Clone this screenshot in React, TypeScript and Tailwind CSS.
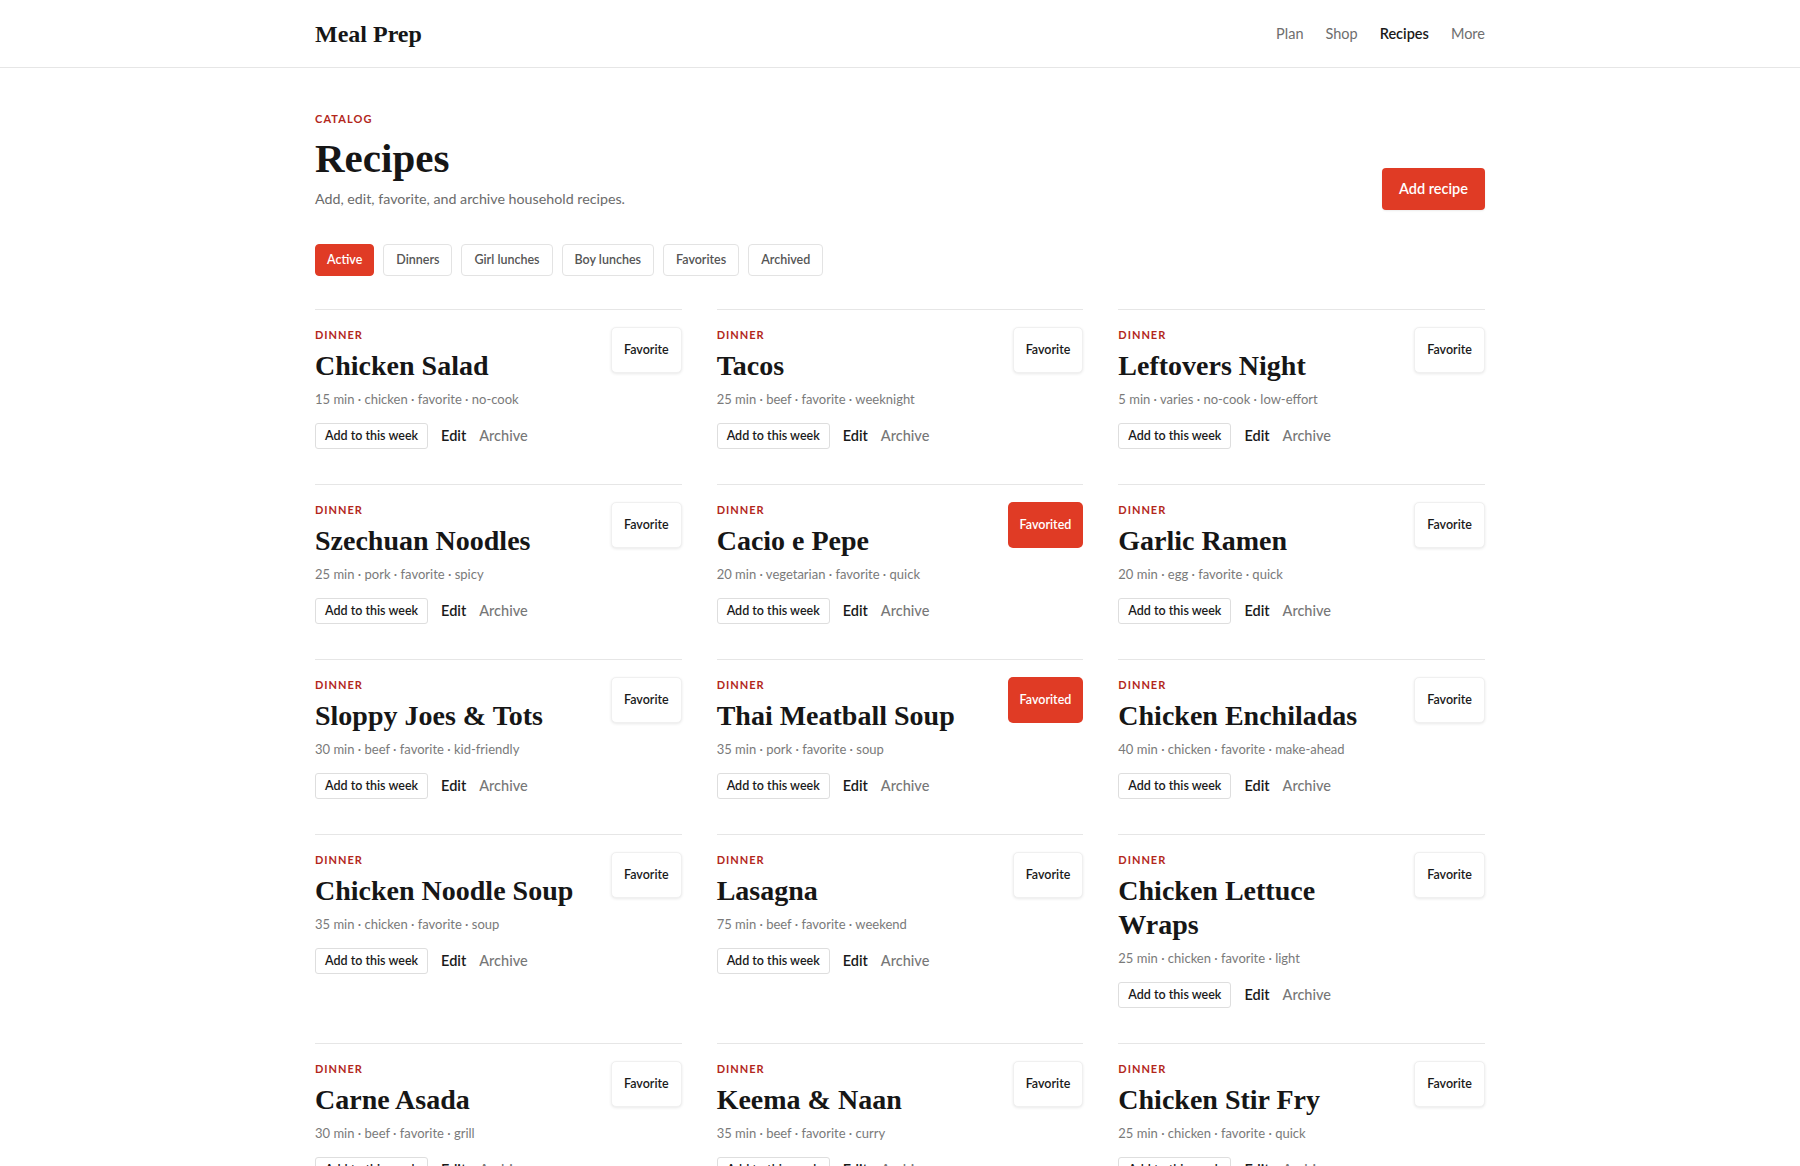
import { useState } from 'react';

type Recipe = {
  name: string;
  meta: string;
  favorited?: boolean;
};

const recipes: Recipe[] = [
  { name: 'Chicken Salad', meta: '15 min · chicken · favorite · no-cook' },
  { name: 'Tacos', meta: '25 min · beef · favorite · weeknight' },
  { name: 'Leftovers Night', meta: '5 min · varies · no-cook · low-effort' },
  { name: 'Szechuan Noodles', meta: '25 min · pork · favorite · spicy' },
  { name: 'Cacio e Pepe', meta: '20 min · vegetarian · favorite · quick', favorited: true },
  { name: 'Garlic Ramen', meta: '20 min · egg · favorite · quick' },
  { name: 'Sloppy Joes & Tots', meta: '30 min · beef · favorite · kid-friendly' },
  { name: 'Thai Meatball Soup', meta: '35 min · pork · favorite · soup', favorited: true },
  { name: 'Chicken Enchiladas', meta: '40 min · chicken · favorite · make-ahead' },
  { name: 'Chicken Noodle Soup', meta: '35 min · chicken · favorite · soup' },
  { name: 'Lasagna', meta: '75 min · beef · favorite · weekend' },
  { name: 'Chicken Lettuce Wraps', meta: '25 min · chicken · favorite · light' },
  { name: 'Carne Asada', meta: '30 min · beef · favorite · grill' },
  { name: 'Keema & Naan', meta: '35 min · beef · favorite · curry' },
  { name: 'Chicken Stir Fry', meta: '25 min · chicken · favorite · quick' },
];

const tabs = ['Active', 'Dinners', 'Girl lunches', 'Boy lunches', 'Favorites', 'Archived'];

const navItems = ['Plan', 'Shop', 'Recipes', 'More'];

/**
 * Single recipe row in the catalog grid
 */
function RecipeCard({ recipe }: { recipe: Recipe }) {
  return (
    <div className="flex items-start justify-between gap-5 border-t border-[#e6e6e6] pt-[17px] pb-[35px]">
      <div className="min-w-0 flex-1">
        <div className="text-[11px] font-bold leading-4 tracking-[0.09em] text-[#b3271c]">DINNER</div>
        <h2 className="mt-[6px] font-['Liberation_Serif',serif] text-[28px] font-bold leading-[34px] text-[#161616]">
          {recipe.name}
        </h2>
        <div className="mt-[6px] text-[13px] leading-5 text-[#7a7a7a]">{recipe.meta}</div>
        <div className="mt-[14px] flex items-center gap-[13px]">
          <button className="h-[26px] rounded-[3px] border border-[#dedede] bg-white px-[9px] text-[12.5px] font-semibold text-[#1a1a1a]">
            Add to this week
          </button>
          <button className="text-[14.5px] font-semibold text-[#1a1a1a]">Edit</button>
          <button className="text-[14.5px] font-medium text-[#777777]">Archive</button>
        </div>
      </div>
      {recipe.favorited ? (
        <button className="h-[46px] shrink-0 rounded-[5px] bg-[#e03b25] px-[12px] text-[12.5px] font-semibold text-white">
          Favorited
        </button>
      ) : (
        <button className="h-[46px] shrink-0 rounded-[5px] border border-[#f0f0f0] bg-white px-[12px] text-[12.5px] font-semibold text-[#1a1a1a] shadow-[0_1px_3px_rgba(0,0,0,0.09)]">
          Favorite
        </button>
      )}
    </div>
  );
}

export default function App() {
  const [activeTab, setActiveTab] = useState('Active');

  return (
    <div className="min-h-screen bg-white font-['Lato','Liberation_Sans',sans-serif] text-[#1a1a1a]">
      {/* Top bar */}
      <header className="h-[68px] border-b border-[#e6e6e6]">
        <div className="mx-auto flex h-full max-w-[1170px] items-center justify-between">
          <div className="font-['Liberation_Serif',serif] text-[24px] font-bold text-[#161616]">Meal Prep</div>
          <nav className="flex items-center gap-[22px] text-[14.5px]">
            {navItems.map((item) => (
              <a
                key={item}
                className={item === 'Recipes' ? 'font-semibold text-[#1a1a1a]' : 'text-[#6e6e6e]'}
              >
                {item}
              </a>
            ))}
          </nav>
        </div>
      </header>

      <main className="mx-auto max-w-[1170px] pt-[43px]">
        {/* Page heading */}
        <div className="flex items-end justify-between">
          <div>
            <div className="text-[11px] font-bold leading-4 tracking-[0.1em] text-[#b3271c]">CATALOG</div>
            <h1 className="mt-[7px] font-['Liberation_Serif',serif] text-[41px] font-bold leading-[48px] text-[#161616]">
              Recipes
            </h1>
            <p className="mt-[6px] text-[14.25px] leading-[22px] text-[#6b6b6b]">
              Add, edit, favorite, and archive household recipes.
            </p>
          </div>
          <button className="h-[42px] rounded-[4px] bg-[#e03b25] px-[17px] text-[14.5px] font-semibold text-white shadow-[0_1px_2px_rgba(0,0,0,0.08)]">
            Add recipe
          </button>
        </div>

        {/* Filters */}
        <div className="mt-[34px] flex gap-[9px]">
          {tabs.map((tab) => (
            <button
              key={tab}
              onClick={() => setActiveTab(tab)}
              className={
                tab === activeTab
                  ? 'h-[32px] rounded-[4px] border border-[#e03b25] bg-[#e03b25] px-[11px] text-[12.5px] font-semibold text-white'
                  : 'h-[32px] rounded-[4px] border border-[#e3e3e3] bg-white px-[12px] text-[12.5px] font-semibold text-[#555555]'
              }
            >
              {tab}
            </button>
          ))}
        </div>

        {/* Recipe grid */}
        <div className="mt-[33px] grid grid-cols-3 gap-x-[35px]">
          {recipes.map((recipe) => (
            <RecipeCard key={recipe.name} recipe={recipe} />
          ))}
        </div>
      </main>
    </div>
  );
}
